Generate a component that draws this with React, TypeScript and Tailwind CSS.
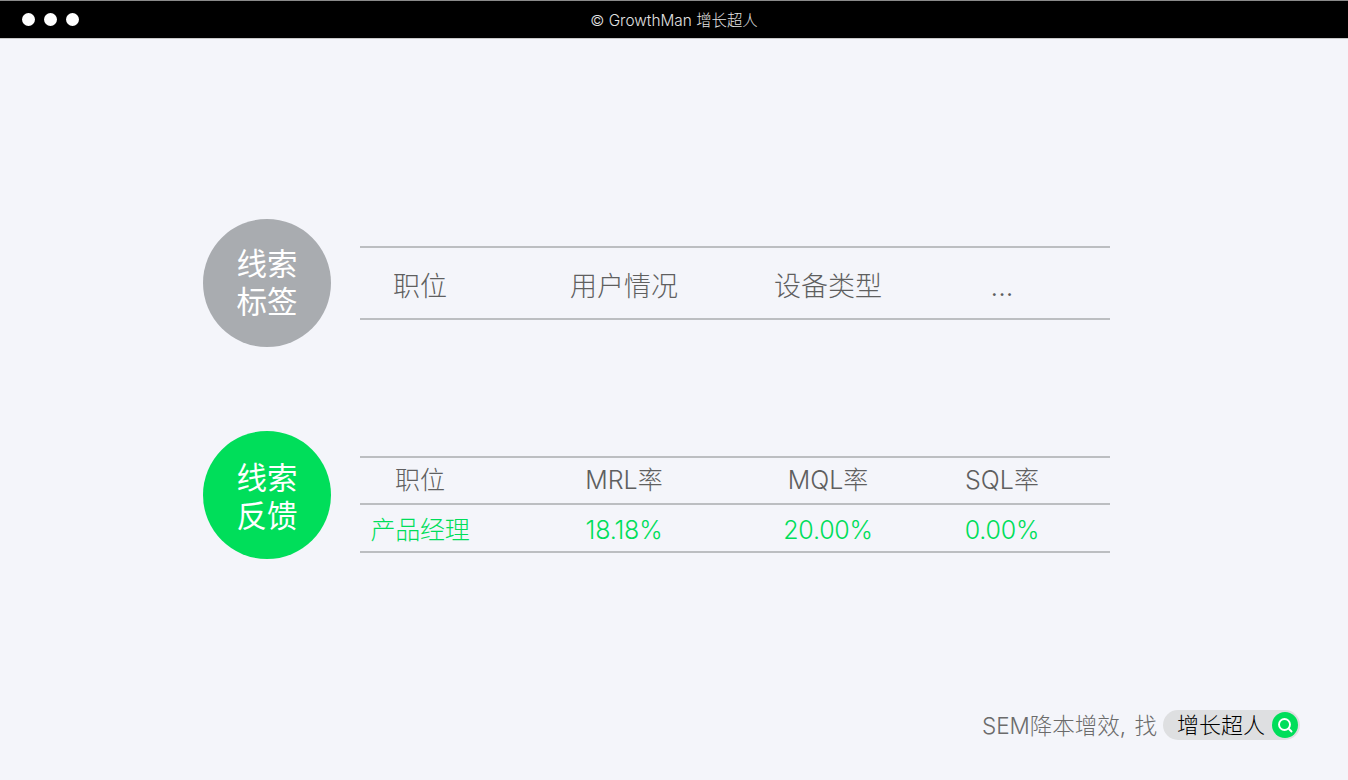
import React from "react";

const font = { fontFamily: '"Inter", "Noto Sans CJK SC", sans-serif' };

function Row({ cells, h, color, text, pad }: { cells: string[]; h: string; color: string; text: string; pad: string }) {
  return (
    <div className={`flex items-center border-b-2 border-[#bcbec1] ${h} ${text} ${color} ${pad}`}>
      <div className="w-[120px] shrink-0 text-center whitespace-nowrap">{cells[0]}</div>
      <div className="w-[40px] shrink-0" />
      <div className="w-[208px] shrink-0 text-center whitespace-nowrap">{cells[1]}</div>
      <div className="w-[200px] shrink-0 text-center whitespace-nowrap">{cells[2]}</div>
      <div className="w-[148px] shrink-0 text-center whitespace-nowrap">{cells[3]}</div>
    </div>
  );
}

function Circle({ color, a, b, pad }: { color: string; a: string; b: string; pad: string }) {
  return (
    <div className={`flex h-[128px] w-[128px] shrink-0 flex-col items-center justify-center rounded-full ${color} ${pad} text-[30.5px] leading-[38px] font-normal text-white`}>
      <span>{a}</span>
      <span>{b}</span>
    </div>
  );
}

export default function App() {
  return (
    <div style={font} className="flex h-[780px] w-[1348px] flex-col overflow-hidden bg-[#f4f5fa] font-light">
      <header className="relative flex h-[39px] shrink-0 items-center justify-center border-y border-[#8a8a8a] border-b-[#c8c8c8] bg-black pt-[2px] text-[15.4px] text-[#e2e2e2]">
        <div className="absolute left-[22px] top-[12px] flex gap-[9px]">
          <span className="h-[13px] w-[13px] rounded-full bg-white" />
          <span className="h-[13px] w-[13px] rounded-full bg-white" />
          <span className="h-[13px] w-[13px] rounded-full bg-white" />
        </div>
        <span>© GrowthMan 增长超人</span>
      </header>

      <main className="flex-1 pl-[203px] pt-[180px]">
        <div className="flex items-start gap-[29px]">
          <Circle color="bg-[#a9acb0]" a="线索" b="标签" pad="pt-0" />
          <div className="mt-[27px] w-[750px] border-t-2 border-[#bcbec1]">
            <Row cells={["职位", "用户情况", "设备类型", "..."]} h="h-[72px]" color="text-[#5f5f5f]" text="text-[27px]" pad="pt-[8px]" />
          </div>
        </div>

        <div className="mt-[84px] flex items-start gap-[29px]">
          <Circle color="bg-[#00de5a]" a="线索" b="反馈" pad="pt-[4px]" />
          <div className="mt-[25px] w-[750px] border-t-2 border-[#bcbec1]">
            <Row cells={["职位", "MRL率", "MQL率", "SQL率"]} h="h-[47px]" color="text-[#5f5f5f]" text="text-[25px]" pad="pt-0" />
            <Row cells={["产品经理", "18.18%", "20.00%", "0.00%"]} h="h-[48px]" color="text-[#00de5a]" text="text-[25px] tracking-[-0.2px]" pad="pt-[6px]" />
          </div>
        </div>
      </main>

      <footer className="flex items-center justify-end gap-[6px] pb-[37px] pr-[48px] text-[22.5px] text-[#6b6b6b]">
        <span className="pt-[2px] [word-spacing:2px]">SEM降本增效, 找</span>
        <div className="flex h-[30px] w-[137px] items-center justify-between rounded-full bg-[#dedfe1] pl-[14px] pr-[2px] text-black">
          <span className="text-[22px] font-light">增长超人</span>
          <span className="flex h-[26px] w-[26px] items-center justify-center rounded-full bg-[#00de5a]">
            <svg width="18" height="18" viewBox="0 0 18 18" fill="none" stroke="white" strokeWidth="1.9" strokeLinecap="round">
              <circle cx="8.5" cy="8.5" r="5.5" />
              <path d="M13 13L15.5 15.5" />
            </svg>
          </span>
        </div>
      </footer>
    </div>
  );
}
